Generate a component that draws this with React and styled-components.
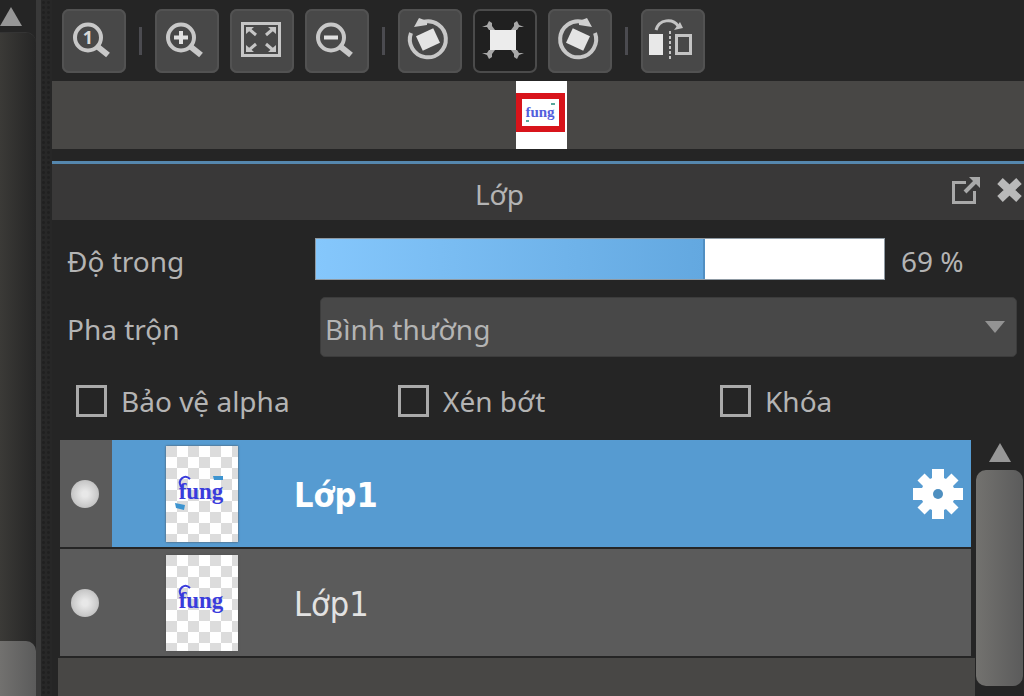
import { useState } from 'react'
import styled, { createGlobalStyle } from 'styled-components'


export default function App() {
    const [opacity, setOpacity] = useState(69)
    const [selected, setSelected] = useState(1)

    return (
        <>
            <GlobalStyle />
            <Workspace>
                <CanvasScroll>
                    <ScrollArrow type="button" aria-label="Cuộn lên" $height={33} $shift><ArrowUp /></ScrollArrow>
                    <CanvasTrack><CanvasThumb /></CanvasTrack>
                </CanvasScroll>
                <Splitter />
                <Docks>
                    <Toolbar>
                        <Tool label="100%"><MagnifierIcon><text x="26" y="35" textAnchor="middle">1</text></MagnifierIcon></Tool>
                        <Separator />
                        <Tool label="Phóng to"><MagnifierIcon><path d="M26 22v13M19 28.500h14" /></MagnifierIcon></Tool>
                        <Tool label="Vừa cửa sổ"><FitIcon /></Tool>
                        <Tool label="Thu nhỏ"><MagnifierIcon><path d="M19 28.500h14" /></MagnifierIcon></Tool>
                        <Separator />
                        <Tool label="Xoay trái"><RotateIcon /></Tool>
                        <Tool label="Đặt lại" active><ResetIcon /></Tool>
                        <Tool label="Xoay phải"><RotateIcon mirrored /></Tool>
                        <Separator />
                        <Tool label="Lật ngang"><FlipIcon /></Tool>
                    </Toolbar>
                    <Navigator>
                        <Preview>
                            <ViewFrame>
                                <svg width="37" height="27" viewBox="0 0 37 27">
                                    <PreviewInk x="18" y="18" textAnchor="middle">fung</PreviewInk>
                                    <path d="M29 5h4M4 22h3" stroke="#58a79b" strokeWidth="2" />
                                </svg>
                            </ViewFrame>
                        </Preview>
                    </Navigator>
                    <TitleBar>
                        <h2>Lớp</h2>
                        <TitleActions>
                            <button type="button" aria-label="Tách cửa sổ">
                                <svg width="30" height="30" viewBox="0 0 30 30" fill="none" stroke="#a9a9a9">
                                    <path d="M15 5.500H2.500v20h21V14" strokeWidth="3" />
                                    <path d="M14 15L24 5" strokeWidth="4" />
                                    <path d="M18 0h11v11z" fill="#a9a9a9" stroke="none" />
                                </svg>
                            </button>
                            <button type="button" aria-label="Đóng">
                                <svg width="28" height="28" viewBox="0 0 28 28" stroke="#b9b9b9" strokeWidth="8">
                                    <path d="M4 3l19 18M23 3L4 21" />
                                </svg>
                            </button>
                        </TitleActions>
                    </TitleBar>
                    <Settings>
                        <Row>
                            <label htmlFor="opacity">Độ trong</label>
                            <Slider
                                id="opacity"
                                type="range"
                                min="0"
                                max="100"
                                value={opacity}
                                style={{ '--level': `${opacity}%` }}
                                onChange={e => setOpacity(Number(e.target.value))}
                            />
                            <output htmlFor="opacity">{opacity} %</output>
                        </Row>
                        <Row>
                            <label htmlFor="blend">Pha trộn</label>
                            <SelectBox>
                                <select id="blend"><option>Bình thường</option></select>
                                <svg width="20" height="12" viewBox="0 0 20 12"><path d="M0 0h20L10 12z" fill="#939393" /></svg>
                            </SelectBox>
                        </Row>
                        <Checks>
                            <label><input type="checkbox" />Bảo vệ alpha</label>
                            <label><input type="checkbox" />Xén bớt</label>
                            <label><input type="checkbox" />Khóa</label>
                        </Checks>
                    </Settings>
                    <LayerArea>
                        <LayerList>
                            {[1, 2].map(id => (
                                <Layer key={id} $selected={id === selected} onClick={() => setSelected(id)}>
                                    <Eye type="button" aria-label="Hiện lớp"><span /></Eye>
                                    <LayerBody $selected={id === selected}>
                                        <Thumbnail marks={id === 1} />
                                        <strong>Lớp1</strong>
                                        {id === selected && (
                                            <GearButton type="button" aria-label="Thuộc tính lớp"><GearIcon /></GearButton>
                                        )}
                                    </LayerBody>
                                </Layer>
                            ))}
                        </LayerList>
                        <LayerScroll>
                            <ScrollArrow type="button" aria-label="Cuộn lên" $height={30}><ArrowUp /></ScrollArrow>
                            <LayerThumb />
                        </LayerScroll>
                    </LayerArea>
                </Docks>
            </Workspace>
        </>
    )
}

function Tool({ label, active, children }) {
    return (
        <ToolButton type="button" aria-label={label} $active={active}>
            <svg width="64" height="64" viewBox="0 0 64 64">{children}</svg>
        </ToolButton>
    )
}

function ArrowUp() {
    return <svg width="22" height="19" viewBox="0 0 22 19"><path d="M11 0l11 19H0z" fill="#969696" /></svg>
}

function MagnifierIcon({ children }) {
    return (
        <Glass>
            <circle cx="26" cy="28.500" r="13" />
            <path d="M36 38l10 8" strokeWidth="6" />
            <g>{children}</g>
        </Glass>
    )
}

function FitIcon() {
    return (
        <g fill="none" stroke="#c6c6c6">
            <rect x="12.500" y="14.500" width="37" height="32" strokeWidth="3" />
            <path d="M19 20l7 6M43 20l-7 6M19 41l7-6M43 41l-7-6" strokeWidth="3" />
            <path d="M16 18h8l-8 7zM46 18h-8l8 7zM16 43h8l-8-7zM46 43h-8l8-7z" fill="#c6c6c6" stroke="none" />
        </g>
    )
}

function RotateIcon({ mirrored }) {
    return (
        <g transform={mirrored ? 'matrix(-1 0 0 1 60 0)' : undefined}>
            <path d="M13 24A18 18 0 1 0 25 13" fill="none" stroke="#c8c8c8" strokeWidth="4" />
            <path d="M21 9l8 3v4l-13 2z" fill="#d0d0d0" />
            <rect x="20.500" y="22.500" width="19" height="16" fill="#e4e4e4" transform="rotate(-25 30 30.500)" />
        </g>
    )
}

function ResetIcon() {
    return (
        <g>
            {['', 'matrix(-1 0 0 1 60 0)', 'matrix(1 0 0 -1 0 62)', 'matrix(-1 0 0 -1 60 62)'].map(flip => (
                <path key={flip} d="M9 18l5-2 2-4 3 2v3l3 4h-6l-2-3z" fill="#a8a8a8" transform={flip || undefined} />
            ))}
            <rect x="17" y="21" width="26" height="20" fill="#ececec" />
        </g>
    )
}

function FlipIcon() {
    return (
        <g fill="none" stroke="#c4c4c4" strokeWidth="3">
            <rect x="8" y="25" width="14" height="21" fill="#e8e8e8" stroke="none" />
            <rect x="35.500" y="26.500" width="14" height="18" />
            <path d="M29 22v28" strokeDasharray="3 2" strokeWidth="2" />
            <path d="M15 21C18 10 32 9 37 17" />
            <path d="M42 19l-9 2 6-8z" fill="#c4c4c4" stroke="none" />
        </g>
    )
}

function GearIcon() {
    return (
        <svg width="52" height="52" viewBox="-26 -26 52 52">
            {[0, 90].map(angle => (
                <rect key={angle} x="-6" y="-25" width="12" height="50" fill="#fff" transform={`rotate(${angle})`} />
            ))}
            {[45, 135].map(angle => (
                <rect key={angle} x="-5" y="-24" width="10" height="48" fill="#fff" transform={`rotate(${angle})`} />
            ))}
            <circle r="17" fill="#fff" />
            <circle r="5" fill="#4e8fc0" />
        </svg>
    )
}

function Thumbnail({ marks }) {
    return (
        <Paper>
            <svg width="72" height="96" viewBox="0 0 72 96">
                <Ink x="35" y="53" textAnchor="middle">fung</Ink>
                <path d="M15 41c-4-8 4-13 9-8" fill="none" stroke="#3a3cdc" strokeWidth="2" />
                {marks && <path d="M47 30h10v4H48zM9 57l10 2-1 5-8-2z" fill="#3d94d0" />}
            </svg>
        </Paper>
    )
}

const GlobalStyle = createGlobalStyle`
    * {
        box-sizing: border-box;
    }
    body {
        margin: 0;
        background: #252525;
        color: #b4b4b4;
        font-family: "Noto Sans", "Open Sans", sans-serif;
        font-size: 28px;
        line-height: 36px;
    }
    button, select, input {
        font: inherit;
        color: inherit;
        margin: 0;
    }
    button {
        border: 0;
        padding: 0;
        background: none;
    }
    svg {
        display: block;
    }
`

const Workspace = styled.div`
    display: grid;
    grid-template-columns: 36px 16px minmax(0, 1fr);
    height: 100vh;
    overflow: hidden;
`

const CanvasScroll = styled.div`
    display: flex;
    flex-direction: column;
`

const ScrollArrow = styled.button`
    display: flex;
    align-items: center;
    justify-content: ${p => p.$shift ? 'flex-start' : 'center'};
    height: ${p => p.$height}px;
    flex-shrink: 0;
    padding-bottom: ${p => p.$shift ? 0 : 6}px;
`

const CanvasTrack = styled.div`
    flex: 1;
    display: flex;
    align-items: flex-end;
    border-radius: 0 10px 0 0;
    background: linear-gradient(to right, #3b3a37, #252525);
    box-shadow: 0 -1px 0 #343434;
`

const CanvasThumb = styled.div`
    width: 100%;
    height: 55px;
    border-radius: 0 10px 0 0;
    background: linear-gradient(to right, #72716f, #5b5b5b);
`

const Splitter = styled.div`
    border-left: 5px solid #393939;
    background: radial-gradient(#202020 1px, #272727 2px) 0 0 / 5px 5px;
`

const Docks = styled.div`
    display: flex;
    flex-direction: column;
    min-height: 0;
`

const Toolbar = styled.div`
    display: flex;
    align-items: center;
    gap: 11px;
    height: 81px;
    flex-shrink: 0;
    padding: 0 10px;
`

const ToolButton = styled.button`
    width: 64px;
    height: 64px;
    flex-shrink: 0;
    border-radius: 7px;
    background: ${p => p.$active ? '#202020' : '#484848'};
    box-shadow: inset 0 0 0 2px ${p => p.$active ? '#4b4b4b' : '#525252'};
`

const Separator = styled.span`
    width: 7px;
    height: 28px;
    border: solid #252525;
    border-width: 0 2px;
    background: #4b4b50;
`

const Glass = styled.g`
    fill: none;
    stroke: #c8c8c8;
    stroke-width: 4px;
    g {
        stroke: #e0e0e0;
    }
    text {
        fill: #d8d8d8;
        stroke: none;
        font-size: 18px;
        font-weight: 700;
    }
`

const Navigator = styled.div`
    height: 68px;
    flex-shrink: 0;
    display: flex;
    justify-content: center;
    background: #484745;
`

const Preview = styled.div`
    width: 51px;
    margin-right: -7px;
    padding-top: 12px;
    background: #fff;
`

const ViewFrame = styled.div`
    border: 6px solid #d8141b;
    height: 39px;
    width: 49px;
`

const PreviewInk = styled.text`
    fill: #5360dd;
    font: 700 15px "Liberation Serif", serif;
`

const TitleBar = styled.header`
    display: flex;
    align-items: center;
    height: 59px;
    flex-shrink: 0;
    margin-top: 12px;
    border-top: 3px solid #5587ae;
    background: #393838;
    h2 {
        flex: 1;
        margin: 0;
        padding-top: 4px;
        font-size: 28px;
        font-weight: 400;
        line-height: 36px;
        text-align: center;
    }
`

const TitleActions = styled.div`
    display: flex;
    align-items: center;
    gap: 15px;
    width: 77px;
    padding-left: 4px;
`

const Settings = styled.div`
    display: flex;
    flex-direction: column;
    flex-shrink: 0;
    gap: 8px;
    padding: 9px 7px 21px 15px;
`

const Row = styled.div`
    display: flex;
    align-items: center;
    height: 60px;
    > label {
        width: 248px;
        flex-shrink: 0;
        padding-top: 4px;
    }
    output {
        width: 132px;
        padding: 4px 0 0 16px;
    }
`

const Slider = styled.input`
    appearance: none;
    flex: 1;
    min-width: 0;
    height: 42px;
    border: 1px solid #8f9aa3;
    background: linear-gradient(to right, #85c7fc, #63a8e0 calc(var(--level) - 5px), #518fc2 calc(var(--level) - 5px), #518fc2 calc(var(--level) - 3px), #fff calc(var(--level) - 3px));
    &::-webkit-slider-thumb {
        appearance: none;
        width: 2px;
        height: 40px;
        background: transparent;
    }
`

const SelectBox = styled.div`
    flex: 1;
    display: grid;
    align-items: center;
    margin-left: 5px;
    > * {
        grid-area: 1 / 1;
    }
    select {
        appearance: none;
        width: 100%;
        height: 60px;
        padding: 4px 40px 0 4px;
        border: 1px solid #3c3c3c;
        border-radius: 5px;
        background: #484848;
    }
    svg {
        justify-self: end;
        margin-right: 12px;
        pointer-events: none;
    }
`

const Checks = styled.div`
    display: grid;
    grid-template-columns: repeat(3, 1fr);
    column-gap: 25px;
    padding: 18px 0 0 9px;
    label {
        display: flex;
        align-items: center;
        gap: 14px;
        white-space: nowrap;
    }
    input {
        appearance: none;
        width: 31px;
        height: 32px;
        border: 3px solid #aaa;
    }
    input:checked {
        background: #569bd1;
    }
`

const LayerArea = styled.div`
    flex: 1;
    min-height: 0;
    display: flex;
`

const LayerList = styled.ul`
    flex: 1;
    margin: 0;
    padding: 0 4px 0 0;
    list-style: none;
    border-left: 6px solid #252525;
    background: #484745;
    overflow: hidden;
`

const Layer = styled.li`
    display: flex;
    height: 109px;
    margin-right: -4px;
    border: solid #252525;
    border-width: 0 4px 2px 2px;
    background: #5b5b5b;
    strong {
        font: ${p => p.$selected ? 700 : 400} 34px/40px "DejaVu Sans Condensed", "DejaVu Sans", sans-serif;
        color: ${p => p.$selected ? '#fff' : '#e2e2e2'};
    }
`

const Eye = styled.button`
    width: 52px;
    display: grid;
    place-items: center;
    span {
        width: 28px;
        height: 28px;
        margin-right: 2px;
        border-radius: 50%;
        background: radial-gradient(#e8e8e8 15%, #cbcbcb 60%, #aaa);
    }
`

const LayerBody = styled.div`
    flex: 1;
    display: flex;
    align-items: center;
    padding: 0 7px 0 54px;
    background: ${p => p.$selected ? '#569bd1' : 'transparent'};
    strong {
        flex: 1;
        margin-left: 56px;
        padding-top: 2px;
    }
`

const Paper = styled.div`
    width: 72px;
    height: 96px;
    background: repeating-conic-gradient(#fff 0 25%, #dcdcdc 0 50%) 0 0 / 22px 22px;
    box-shadow: 0 0 2px #505050;
`

const Ink = styled.text`
    fill: #3a3cdc;
    font: 700 23px "Liberation Serif", serif;
`

const GearButton = styled.button`
    width: 52px;
    height: 52px;
`

const LayerScroll = styled.div`
    width: 49px;
    display: flex;
    flex-direction: column;
`

const LayerThumb = styled.div`
    flex: 1;
    margin: 0 1px 10px;
    border-radius: 10px;
    background: linear-gradient(to right, #73726f, #5b5b5b);
`
